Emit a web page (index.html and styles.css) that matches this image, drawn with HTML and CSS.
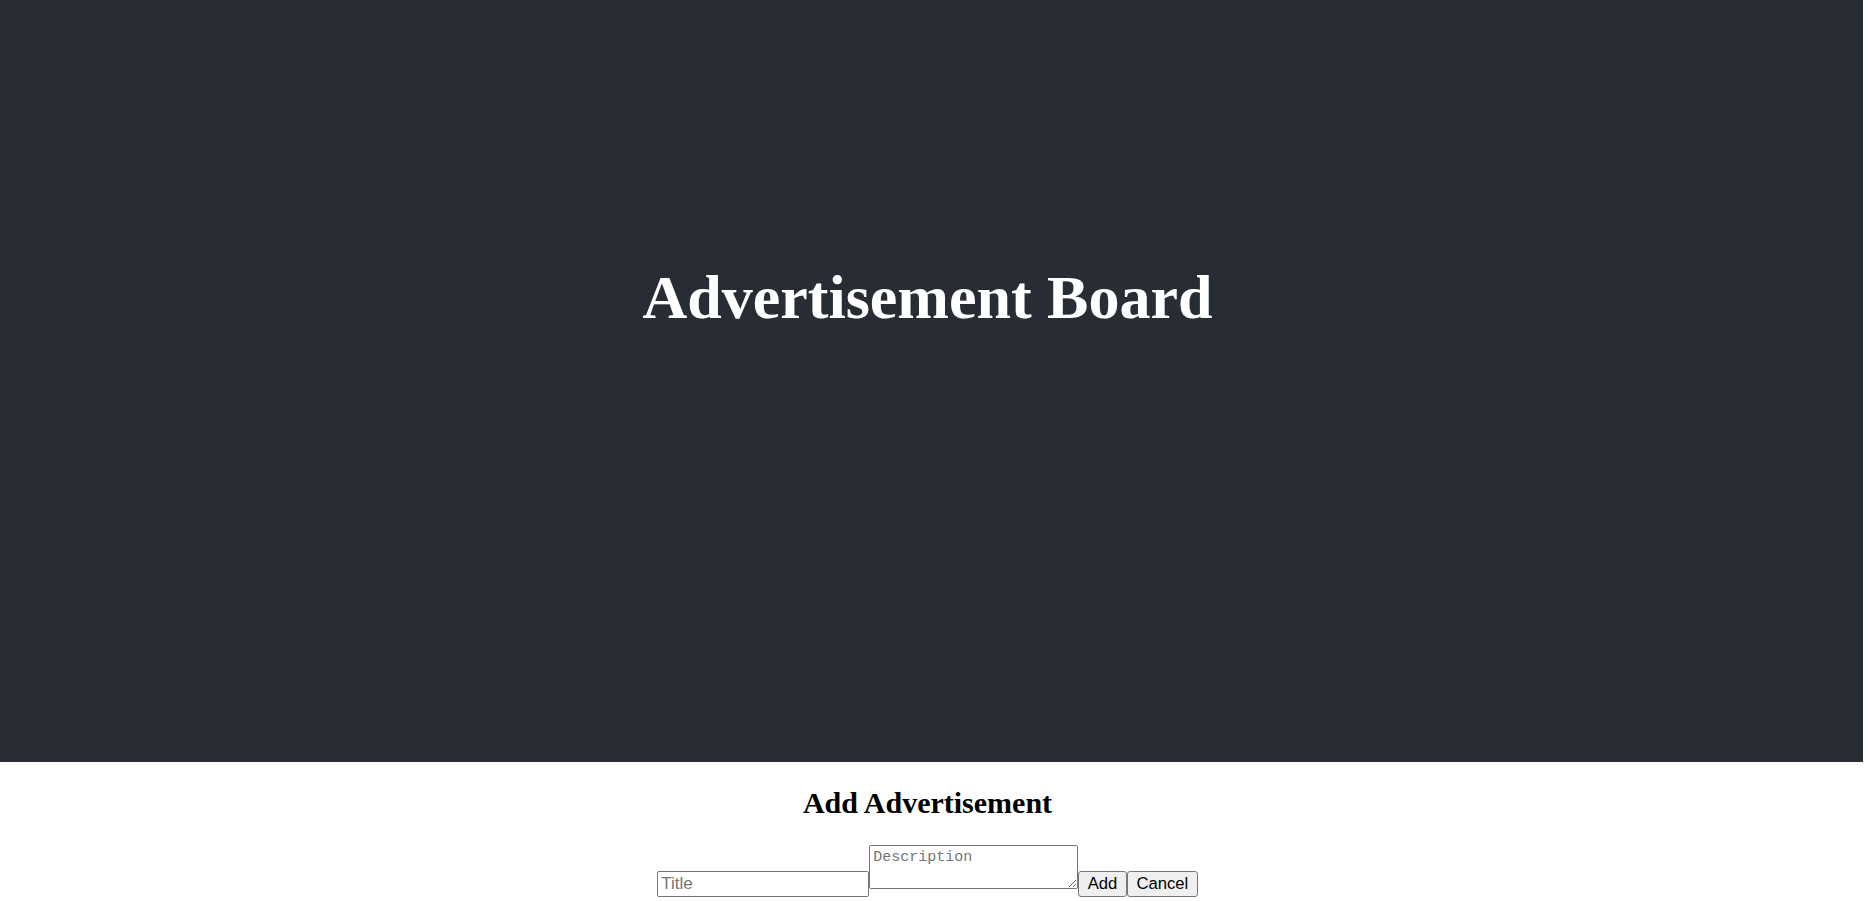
FILE: index.html
```html
<!DOCTYPE html>
<html>
<head>
<meta charset="utf-8">
<title>Advertisement Board</title>
<link rel="stylesheet" href="styles.css">
</head>
<body>
<div class="app">
  <header class="app-header">
    <h1 class="board-title">Advertisement Board</h1>
  </header>
  <section class="add-section">
    <h2 class="add-title">Add Advertisement</h2>
    <form class="add-form"><input class="field-title" type="text" placeholder="Title"><textarea class="field-desc" placeholder="Description"></textarea><button class="btn" type="button">Add</button><button class="btn" type="button">Cancel</button></form>
  </section>
</div>
</body>
</html>
```

FILE: styles.css
```css
html, body {
  margin: 0;
  padding: 0;
  background: #ffffff;
  overflow: hidden;
}

body {
  font-family: "Liberation Serif", "Times New Roman", serif;
}

.app {
  width: 1855px;
  text-align: center;
}

.app-header {
  box-sizing: border-box;
  width: 1863px;
  height: 762px;
  padding-right: 8px;
  background-color: #282c34;
  color: #ffffff;
  display: flex;
  flex-direction: column;
  align-items: center;
}

.board-title {
  margin: 0;
  padding-top: 262px;
  font-size: 62px;
  font-weight: bold;
  line-height: 71px;
}

.add-section {
  text-align: center;
}

.add-title {
  margin: 23px 0 25px;
  font-size: 30px;
  font-weight: bold;
  line-height: 35px;
}

.add-form {
  margin: 0;
}

.field-title {
  box-sizing: border-box;
  width: 212px;
  height: 26px;
  padding: 1px 3px;
  border: 1px solid #767676;
  border-radius: 2px;
  font-family: "Liberation Sans", Arial, sans-serif;
  font-size: 17px;
  vertical-align: baseline;
}

.field-title::placeholder {
  color: #757575;
}

.field-desc {
  box-sizing: border-box;
  width: 209px;
  height: 44px;
  padding: 2px 3px;
  border: 1px solid #767676;
  border-radius: 2px;
  font-family: "Liberation Mono", "DejaVu Sans Mono", monospace;
  font-size: 15px;
  line-height: 19px;
  margin: 0;
}

.field-desc::placeholder {
  color: #757575;
}

.btn {
  box-sizing: border-box;
  height: 26px;
  padding: 1px 8.5px;
  margin: 0;
  border: 1px solid #767676;
  border-radius: 3px;
  background-color: #efefef;
  color: #000000;
  font-family: "Liberation Sans", Arial, sans-serif;
  font-size: 16.67px;
}
```
